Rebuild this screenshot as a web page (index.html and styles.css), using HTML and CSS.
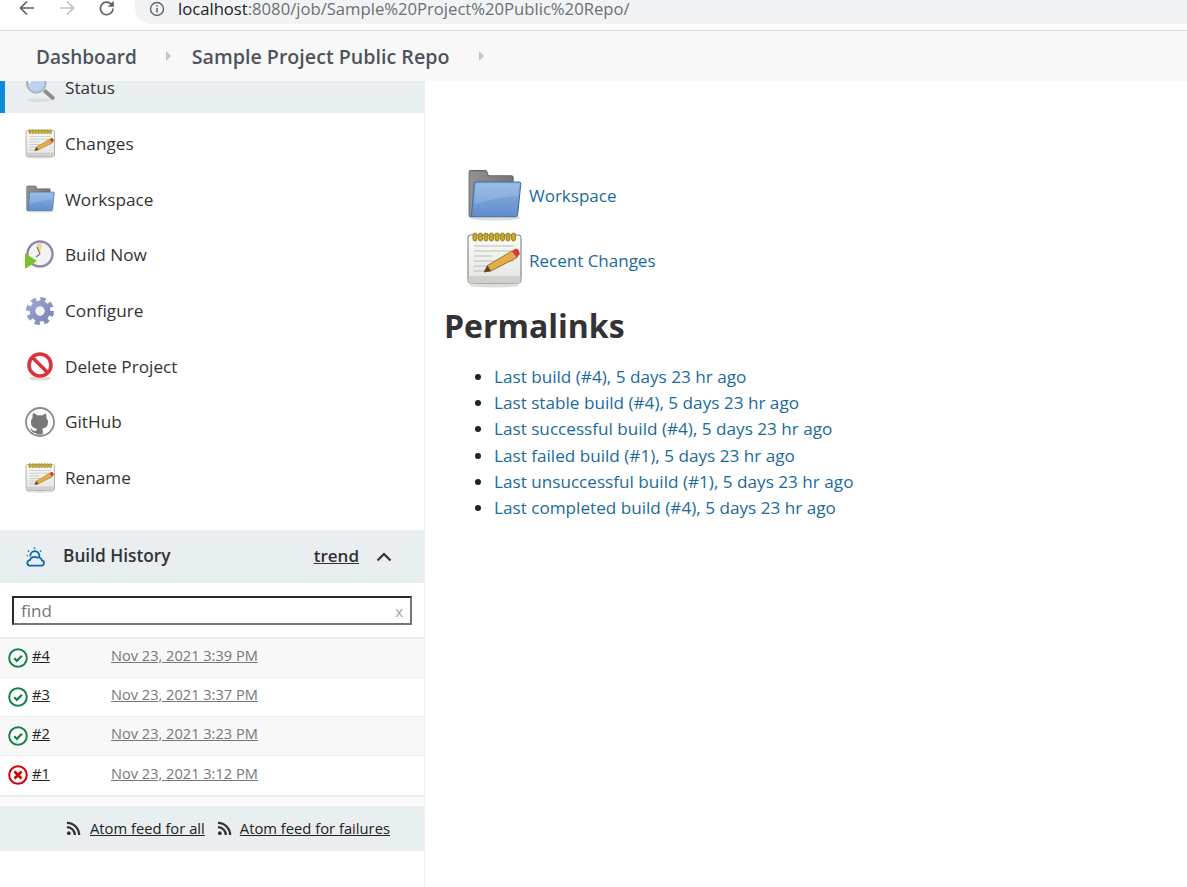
FILE: index.html
```html
<!DOCTYPE html>
<html lang="en">
<head>
  <meta charset="UTF-8">
  <title>Sample Project Public Repo</title>
  <link rel="stylesheet" href="styles.css">
</head>
<body>
  <svg class="defs" width="0" height="0">
    <defs>
      <linearGradient id="folderBlue" x1="0" y1="0" x2="0" y2="1">
        <stop offset="0" stop-color="#8fb4e3"/>
        <stop offset="1" stop-color="#5f8cca"/>
      </linearGradient>
      <linearGradient id="folderGrey" x1="0" y1="0" x2="1" y2="0">
        <stop offset="0" stop-color="#929292"/>
        <stop offset="1" stop-color="#757575"/>
      </linearGradient>
      <linearGradient id="paper" x1="0" y1="0" x2="0" y2="1">
        <stop offset="0" stop-color="#fbfbf8"/>
        <stop offset="1" stop-color="#e4e4e0"/>
      </linearGradient>
      <linearGradient id="gear" x1="0" y1="0" x2="1" y2="1">
        <stop offset="0" stop-color="#9aa3d0"/>
        <stop offset="1" stop-color="#7f88b4"/>
      </linearGradient>
      <symbol id="i-folder" viewBox="0 0 54 50">
        <ellipse cx="28" cy="47" rx="25" ry="2.5" fill="#ddd"/>
        <path d="M3 3q0-1.500 1.500-1.500h14q1.500 0 2 2l1 3h22q2 0 2 2v5H10L6 46H4.500Q3 46 3 44.500z" fill="url(#folderGrey)" stroke="#666"/>
        <path d="M10 12.500h41q2 0 1.800 2l-3 29.500q-.3 2-2 2H7q-2 0-1.700-2L8 14.500q.2-2 2-2z" fill="url(#folderBlue)" stroke="#3f6ca8"/>
        <path d="M10 14h41l-1 12q-20 1-42 8z" fill="#fff" opacity=".14"/>
      </symbol>
      <symbol id="i-notes" viewBox="0 0 56 56">
        <ellipse cx="28" cy="53" rx="25" ry="2.500" fill="#ddd"/>
        <rect x="2" y="3" width="53" height="48" rx="2.500" fill="url(#paper)" stroke="#77776f"/>
        <rect x="2.500" y="44" width="52" height="7" rx="2" fill="#cfcfcb"/>
        <g fill="#c6a92c" stroke="#8c7514" stroke-width=".8">
          <rect x="7" y="1" width="4" height="8" rx="2"/><rect x="12.500" y="1" width="4" height="8" rx="2"/>
          <rect x="18" y="1" width="4" height="8" rx="2"/><rect x="23.500" y="1" width="4" height="8" rx="2"/>
          <rect x="29" y="1" width="4" height="8" rx="2"/><rect x="34.500" y="1" width="4" height="8" rx="2"/>
          <rect x="40" y="1" width="4" height="8" rx="2"/><rect x="45.500" y="1" width="4" height="8" rx="2"/>
        </g>
        <g stroke="#bdbdb6" stroke-width="1.200">
          <path d="M8 14h40M8 19h40M8 24h18M8 29h40M8 34h20M8 39h12"/>
        </g>
        <path d="M18 40l3.500-6.500L46 19l5 6.500L25 39z" fill="#e3ad48" stroke="#8a5d18" stroke-width=".8"/>
        <path d="M46 19l3-2q2-1 3.500 1l1 2.500q.8 2-1 3l-1.500 2z" fill="#d83a3a"/>
        <path d="M18 40l3.500-6.500 3.500 5.500z" fill="#5d4020"/>
      </symbol>
      <symbol id="i-search" viewBox="0 0 32 32">
        <ellipse cx="15" cy="29" rx="13" ry="2" fill="#ddd"/>
        <path d="M19 20l3-3 9 8q1.500 1.500 0 3t-3 0z" fill="#8c8c8c"/>
        <circle cx="12" cy="11" r="10" fill="#bcd2ee" stroke="#aab2bd" stroke-width="2"/>
        <path d="M5 11a7 7 0 0 1 7-7" stroke="#fff" stroke-width="2" fill="none"/>
      </symbol>
      <symbol id="i-rss" viewBox="0 0 16 16">
        <circle cx="3" cy="13" r="2" fill="#333"/>
        <path d="M1 6.500a8.500 8.500 0 0 1 8.500 8.500M1 2a13 13 0 0 1 13 13" fill="none" stroke="#333" stroke-width="2.400"/>
      </symbol>
      <symbol id="i-ok" viewBox="0 0 20 20">
        <circle cx="10" cy="10" r="8.800" fill="#fff" stroke="#138347" stroke-width="2"/>
        <path d="M6.200 10.200l2.700 2.700 5-5.200" fill="none" stroke="#138347" stroke-width="2.300"/>
      </symbol>
      <symbol id="i-fail" viewBox="0 0 20 20">
        <circle cx="10" cy="10" r="8.800" fill="#fff" stroke="#cc0003" stroke-width="2"/>
        <path d="M6.500 6.500l7 7M13.500 6.500l-7 7" fill="none" stroke="#cc0003" stroke-width="2.600"/>
      </symbol>
    </defs>
  </svg>

  <div class="toolbar">
    <svg class="nav-btn" viewBox="0 0 18 18" width="18" height="18"><path d="M16 8H3M9 1.500L2.500 8 9 14.500" fill="none" stroke="#5f6368" stroke-width="1.700"/></svg>
    <svg class="nav-btn off" viewBox="0 0 18 18" width="18" height="18"><path d="M2 8h13M9 1.500L15.500 8 9 14.500" fill="none" stroke="#bdc1c6" stroke-width="1.700"/></svg>
    <svg class="nav-btn" viewBox="0 0 18 18" width="18" height="18"><path d="M15 8.500a6.300 6.300 0 1 1-1.900-4.600L15 5.800" fill="none" stroke="#5f6368" stroke-width="1.700"/><path d="M15.800 .8v6h-6z" fill="#5f6368"/></svg>
    <div class="url">
      <svg viewBox="0 0 16 16" width="16" height="16"><circle cx="8" cy="8" r="6.500" fill="none" stroke="#5f6368" stroke-width="1.400"/><path d="M8 7v4.500M8 4.200v1.600" stroke="#5f6368" stroke-width="1.500"/></svg>
      <span class="host">localhost</span><span>:8080/job/Sample%20Project%20Public%20Repo/</span>
    </div>
  </div>

  <div class="crumbs">
    <a href="#">Dashboard</a>
    <span class="crumb-arrow"></span>
    <a class="crumb-job" href="#">Sample Project Public Repo</a>
    <span class="crumb-arrow last"></span>
  </div>

  <div class="page">
    <aside class="side">
      <a class="task active" href="#"><svg class="task-icon"><use href="#i-search"/></svg>Status</a>
      <a class="task" href="#"><svg class="task-icon"><use href="#i-notes"/></svg>Changes</a>
      <a class="task" href="#"><svg class="task-icon"><use href="#i-folder"/></svg>Workspace</a>
      <a class="task" href="#">
        <svg class="task-icon" viewBox="0 0 30 30">
          <circle cx="15" cy="14" r="12.500" fill="#f3f3f3" stroke="#8d8aa6" stroke-width="2.400"/>
          <path d="M15 14L11 4.500q3-1.500 6-1z" fill="#e6d9a0"/>
          <path d="M15 14l-4 3M15 14l-3-7" stroke="#777" stroke-width="1.200"/>
          <path d="M0 13l12 8-12 8z" fill="#7cc22a"/>
        </svg>Build Now</a>
      <a class="task" href="#">
        <svg class="task-icon" viewBox="0 0 30 30">
          <circle cx="15" cy="15" r="11.500" fill="none" stroke="url(#gear)" stroke-width="5" stroke-dasharray="5 4.030"/>
          <circle cx="15" cy="15" r="7.500" fill="none" stroke="url(#gear)" stroke-width="6"/>
          <circle cx="15" cy="15" r="4.500" fill="#f2f2f6"/>
        </svg>Configure</a>
      <a class="task" href="#">
        <svg class="task-icon" viewBox="0 0 30 30">
          <ellipse cx="15" cy="27.500" rx="11" ry="2" fill="#ddd"/>
          <circle cx="15" cy="14" r="11" fill="#fff" stroke="#d9343a" stroke-width="3.600"/>
          <path d="M7.500 6.500l15 15" stroke="#d9343a" stroke-width="3.600"/>
        </svg>Delete Project</a>
      <a class="task" href="#">
        <svg class="task-icon" viewBox="0 0 30 30">
          <circle cx="15" cy="15" r="14" fill="#fff" stroke="#8a8a8a" stroke-width="1.800"/>
          <path fill="#777" d="M9.200 6.200l3.600 2.200q2.200-.5 4.400 0l3.600-2.200q1 2.400.4 4.400q1.800 2 1.800 4.900q0 5.500-6 6.200q.8.8.8 2.200v3.500h-6.600v-1.500q-3.400.6-4.600-2.200q-.6-1.400-1.800-2q1.600-.4 2.600 1.200q1.400 1.600 3.800.8q0-1 .7-2q-6-.7-6-6.200q0-2.900 1.800-4.900q-.6-2 .4-4.400z"/>
        </svg>GitHub</a>
      <a class="task" href="#"><svg class="task-icon"><use href="#i-notes"/></svg>Rename</a>

      <div class="history-head">
        <svg class="weather" viewBox="0 0 24 24" width="22" height="22" fill="none" stroke="#0b6aa2" stroke-width="1.900">
          <path d="M6 21.500h13a3 3 0 0 0 .6-5.900 4.500 4.500 0 0 0-5.600-3 5 5 0 0 0-7.500 2.800A3.100 3.100 0 0 0 6 21.500z"/>
          <path d="M7 11.500a5 5 0 0 1 5-6 5 5 0 0 1 4.500 6.500M11.500 1.500v1.500M4.500 5l1 1M18.500 5l-1 1M3 10.500h1"/>
        </svg>
        <span class="history-title">Build History</span>
        <a class="trend" href="#">trend</a>
        <svg class="chevron" viewBox="0 0 16 10" width="16" height="10"><path d="M1.500 8.500L8 2l6.500 6.500" fill="none" stroke="#333" stroke-width="2.200"/></svg>
      </div>

      <div class="find-wrap">
        <div class="find"><span class="find-text">find</span><span class="find-x">x</span></div>
      </div>

      <div class="builds">
        <div class="build">
          <svg class="build-icon"><use href="#i-ok"/></svg>
          <a class="build-num" href="#">#4</a><a class="build-date" href="#">Nov 23, 2021 3:39 PM</a>
        </div>
        <div class="build">
          <svg class="build-icon"><use href="#i-ok"/></svg>
          <a class="build-num" href="#">#3</a><a class="build-date" href="#">Nov 23, 2021 3:37 PM</a>
        </div>
        <div class="build">
          <svg class="build-icon"><use href="#i-ok"/></svg>
          <a class="build-num" href="#">#2</a><a class="build-date" href="#">Nov 23, 2021 3:23 PM</a>
        </div>
        <div class="build">
          <svg class="build-icon"><use href="#i-fail"/></svg>
          <a class="build-num" href="#">#1</a><a class="build-date" href="#">Nov 23, 2021 3:12 PM</a>
        </div>
      </div>

      <div class="feeds">
        <svg class="rss"><use href="#i-rss"/></svg><a href="#">Atom feed for all</a>
        <svg class="rss second"><use href="#i-rss"/></svg><a href="#">Atom feed for failures</a>
      </div>
    </aside>

    <main class="content">
      <div class="big-link first"><svg class="big-icon"><use href="#i-folder"/></svg><a href="#">Workspace</a></div>
      <div class="big-link"><svg class="big-icon"><use href="#i-notes"/></svg><a href="#">Recent Changes</a></div>
      <h1>Permalinks</h1>
      <ul class="permalinks">
        <li><a href="#">Last build (#4), 5 days 23 hr ago</a></li>
        <li><a href="#">Last stable build (#4), 5 days 23 hr ago</a></li>
        <li><a href="#">Last successful build (#4), 5 days 23 hr ago</a></li>
        <li><a href="#">Last failed build (#1), 5 days 23 hr ago</a></li>
        <li><a href="#">Last unsuccessful build (#1), 5 days 23 hr ago</a></li>
        <li><a href="#">Last completed build (#4), 5 days 23 hr ago</a></li>
      </ul>
    </main>
  </div>
</body>
</html>
```

FILE: styles.css
```css
* { box-sizing: border-box; margin: 0; padding: 0; }
html, body { height: 100%; overflow: hidden; }
body {
  font-family: 'Open Sans', 'Noto Sans', sans-serif;
  color: #333;
  background: #fff;
  display: flex;
  flex-direction: column;
}
a { color: inherit; text-decoration: none; }
.defs { display: block; height: 0; }

.toolbar {
  height: 31px;
  flex: none;
  display: flex;
  align-items: flex-start;
  border-bottom: 1px solid #dadce0;
  background: #fff;
  overflow: hidden;
}
.nav-btn { flex: none; margin: 0 0 0 22px; }
.nav-btn:first-child { margin-left: 18px; }
.url {
  flex: 1;
  height: 24px;
  margin-left: 19px;
  padding: 0 0 6px 14px;
  display: flex;
  align-items: center;
  background: #f1f3f4;
  border-bottom-left-radius: 16px;
  font-size: 16.650px;
  line-height: 18px;
  color: #6b7075;
  white-space: nowrap;
}
.url svg { margin-right: 13px; flex: none; }
.host { color: #202124; }

.crumbs {
  height: 50px;
  flex: none;
  display: flex;
  align-items: center;
  padding: 1px 0 0 36px;
  background: #f8f8f8;
  color: #4d545d;
  font-size: 19px;
  font-weight: 600;
  position: relative;
  z-index: 1;
}
.crumb-job { font-size: 19.650px; }
.crumb-arrow {
  width: 0;
  height: 0;
  margin: 0 21px 2px 29px;
  border-left: 5px solid #c4c4c4;
  border-top: 5px solid transparent;
  border-bottom: 5px solid transparent;
}
.crumb-arrow.last { margin-left: 30px; }

.page { flex: 1; display: flex; min-height: 0; }
.side {
  width: 425px;
  flex: none;
  border-right: 1px solid #eaeff2;
}
.task {
  height: 55.67px;
  display: flex;
  align-items: center;
  padding: 5.500px 0 0 25px;
  font-size: 17.200px;
  color: #333;
}
.task-icon { width: 30px; height: 30px; margin-right: 10px; flex: none; }
.task.active {
  height: 32px;
  padding: 0 0 19px 20px;
  background: #e9eef1;
  border-left: 5px solid #0b8bd9;
}

.history-head {
  height: 53px;
  margin-top: 27.5px;
  display: flex;
  align-items: center;
  padding: 0 32px 0 24px;
  background: #e9eef1;
}
.weather { flex: none; margin-right: 17px; }
.history-title { font-weight: 600; font-size: 17.300px; flex: 1; margin-top: -3px; }
.trend { font-weight: 600; font-size: 17px; text-decoration: underline; margin: -3px 17px 0 0; }

.find-wrap { height: 56px; padding: 13px 12px 0; border-bottom: 2px solid #eaeff2; }
.find {
  height: 29px;
  display: flex;
  align-items: center;
  justify-content: space-between;
  padding: 0 7px;
  border: 2px solid;
  border-color: #2a2a2a #767676 #767676 #2a2a2a;
  font-size: 17px;
  color: #757575;
}
.find-x { color: #a0a0a0; font-size: 15px; }

.builds { border-bottom: 2px solid #eaeff2; }
.build {
  height: 39px;
  display: flex;
  align-items: center;
  border-bottom: 1px solid #eaeff2;
  padding-left: 8px;
  font-size: 14.600px;
}
.build:nth-child(odd) { background: #f8f8f8; }
.build:last-child { border-bottom: none; }
.build-icon { width: 20px; height: 20px; margin: -1px 4px 0 0; flex: none; }
.build-num { width: 79px; text-decoration: underline; color: #222; margin-top: -6px; }
.build-date { text-decoration: underline; color: #777; margin-top: -6px; }

.feeds {
  height: 45px;
  margin-top: 9px;
  display: flex;
  align-items: center;
  padding-left: 66px;
  background: #e9eef1;
  font-size: 14.770px;
  position: relative;
}
.feeds::before {
  content: "";
  position: absolute;
  left: 0;
  right: 0;
  top: -9px;
  height: 9px;
  background: #f8f8f8;
}
.feeds a { text-decoration: underline; color: #222; margin-top: -2px; }
.rss { width: 15px; height: 15px; margin-right: 9px; flex: none; }
.rss.second { margin-left: 12px; margin-right: 8px; }

.content { flex: 1; padding-left: 20px; }
.big-link {
  display: flex;
  align-items: center;
  height: 65px;
  padding-left: 21px;
  font-size: 17px;
  color: #1b6a9c;
}
.big-link.first { margin-top: 81.5px; }
.big-icon { width: 56px; height: 56px; margin: -1px 7px 0 0; flex: none; }
h1 { font-size: 32px; font-weight: 700; color: #333; margin: 8.5px 0 0 -1px; line-height: 50px; }
.permalinks { margin: 13px 0 0 49px; font-size: 17.150px; line-height: 26.200px; color: #1b6a9c; }
.permalinks li::marker { color: #222; }
```
